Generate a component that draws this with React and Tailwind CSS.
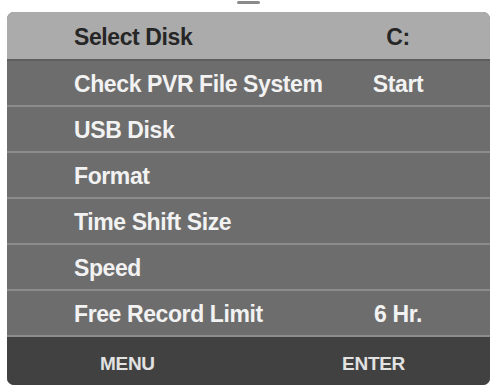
const rows = [
  { name: 'Check PVR File System', value: 'Start' },
  { name: 'USB Disk', value: '' },
  { name: 'Format', value: '' },
  { name: 'Time Shift Size', value: '' },
  { name: 'Speed', value: '' },
  { name: 'Free Record Limit', value: '6 Hr.' },
];

export default function App() {
  return (
    <div
      className="w-[492px] h-[390px] bg-white overflow-hidden"
      style={{ fontFamily: '"Liberation Sans", Arial, sans-serif' }}
    >
      {/* little tab mark above the panel */}
      <div className="ml-[237px] mt-[1px] h-[3px] w-[23px] rounded-full bg-[#8a8a8a]" />

      <div className="ml-[7px] mt-[8px] w-[483px] rounded-[7px] overflow-hidden bg-[#6d6d6d]">
        {/* Header row */}
        <div className="h-[47px] flex items-center pt-[3px] pl-[67px] pr-[52px] bg-[#ababab] text-[#262626] text-[23px] font-bold tracking-[-0.4px]">
          <span className="flex-1">Select Disk</span>
          <span className="w-[80px] text-center">C:</span>
        </div>

        {rows.map((row, i) => (
          <div
            key={row.name}
            className={
              'h-[46px] flex items-center pt-[3px] pl-[67px] pr-[52px] border-t-2 text-[#f2f2f2] text-[23px] font-bold tracking-[-0.4px] ' +
              (i === 0 ? 'border-[#5f5f5f]' : 'border-[#8c8c8c]')
            }
          >
            <span className="flex-1">{row.name}</span>
            <span className="w-[80px] text-center">{row.value}</span>
          </div>
        ))}

        {/* Footer */}
        <div className="h-[50px] flex items-center justify-between pt-[7px] pl-[93px] pr-[85px] border-t-2 border-[#8c8c8c] bg-[#414141] text-[#e2e2e2] text-[19px] font-bold tracking-[-0.3px]">
          <span>MENU</span>
          <span>ENTER</span>
        </div>
      </div>
    </div>
  );
}
